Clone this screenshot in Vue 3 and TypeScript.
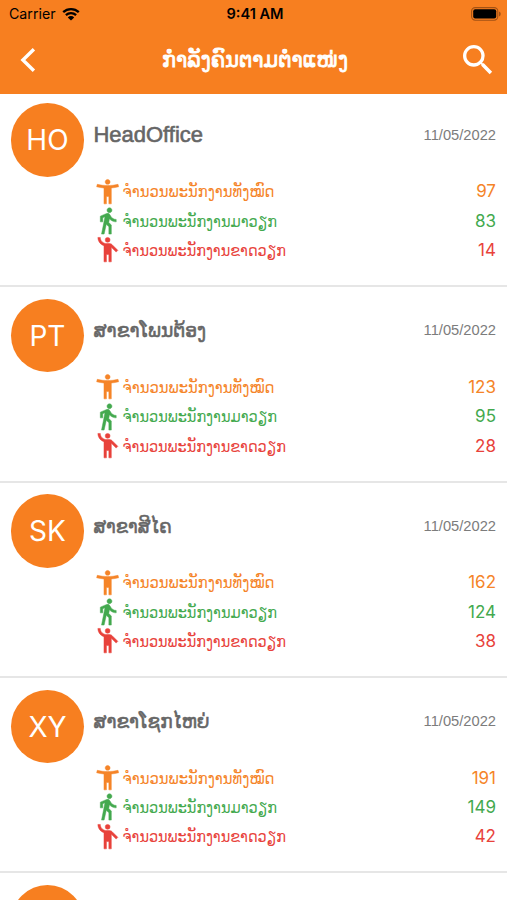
<script setup lang="ts">
interface Branch {
  initials: string
  name: string
  width: number
  latin?: boolean
  date: string
  counts: [number, number, number]
}

const branches: Branch[] = [
  { initials: 'HO', name: 'HeadOffice', width: 109.5, latin: true, date: '11/05/2022', counts: [97, 83, 14] },
  { initials: 'PT', name: 'ສາຂາໂພນຕ້ອງ', width: 112.5, date: '11/05/2022', counts: [123, 95, 28] },
  { initials: 'SK', name: 'ສາຂາສີໄຄ', width: 78, date: '11/05/2022', counts: [162, 124, 38] },
  { initials: 'XY', name: 'ສາຂາໂຊກໄຫຍ່', width: 116, date: '11/05/2022', counts: [191, 149, 42] },
]

const stats = [
  {
    kind: 'total',
    label: 'ຈຳນວນພະນັກງານທັງໝົດ',
    width: 152,
    icon: 'M20.5 6c-2.61.7-5.67 1-8.5 1s-5.89-.3-8.5-1L3 8c1.86.5 4 .83 6 1v13h2v-6h2v6h2V9c2-.17 4.14-.5 6-1l-.5-2zM12 6c1.1 0 2-.9 2-2s-.9-2-2-2-2 .9-2 2 .9 2 2 2z',
  },
  {
    kind: 'present',
    label: 'ຈຳນວນພະນັກງານມາວຽກ',
    width: 154.5,
    icon: 'M13.5 5.5c1.1 0 2-.9 2-2s-.9-2-2-2-2 .9-2 2 .9 2 2 2zM9.8 8.9L7 23h2.1l1.8-8 2.1 2v6h2v-7.5l-2.1-2 .6-3C14.8 12 16.8 13 19 13v-2c-1.9 0-3.5-1-4.3-2.4l-1-1.6c-.4-.6-1-1-1.7-1-.3 0-.5.1-.8.1L6 8.3V13h2V9.6l1.8-.7',
  },
  {
    kind: 'absent',
    label: 'ຈຳນວນພະນັກງານຂາດວຽກ',
    width: 163.5,
    icon: 'M12 2a2 2 0 1 1 0 4 2 2 0 0 1 0-4zM15.89 8.11C15.5 7.72 14.83 7 13.53 7h-2.54C8.24 6.99 6 4.75 6 2H4c0 3.16 2.11 5.84 5 6.71V22h2v-6h2v6h2V10.05L18.95 14l1.41-1.41-4.47-4.48z',
  },
]
</script>

<template>
  <div class="screen">
    <header class="header">
      <div class="status">
        <div class="carrier">
          <span>Carrier</span>
          <svg class="wifi" viewBox="0 0 18 14">
            <path d="M1.2 5.2a11.2 11.2 0 0 1 15.6 0M3.9 8.1a7.4 7.4 0 0 1 10.2 0" fill="none" stroke="#000" stroke-width="2.3" />
            <path d="M9 13.6L5.8 10.4a4.6 4.6 0 0 1 6.4 0z" />
          </svg>
        </div>
        <span class="clock">9:41 AM</span>
        <svg class="battery" viewBox="0 0 30 14">
          <rect x="0.6" y="0.6" width="26.2" height="12.6" rx="3.6" fill="none" stroke="#a35214" stroke-width="1.1" />
          <rect x="2.2" y="2.2" width="23" height="9.4" rx="2" />
          <path d="M28 4.6c1.2.4 1.7 1.3 1.7 2.4s-.5 2-1.7 2.4z" fill="#a35214" />
        </svg>
      </div>
      <div class="nav">
        <svg class="back" viewBox="0 0 16 26"><path d="M13.9 2.2L2.9 13l11 10.8" fill="none" stroke="#fff" stroke-width="3.4" /></svg>
        <h1 class="title">
          <svg class="text" width="186" height="36">
            <text x="0" y="25" textLength="186" lengthAdjust="spacingAndGlyphs">ກຳລັງຄົນຕາມຕຳແໜ່ງ</text>
          </svg>
        </h1>
        <svg class="search" viewBox="0 0 24 24"><path fill="#fff" d="M15.5 14h-.79l-.28-.27A6.471 6.471 0 0 0 16 9.5 6.5 6.5 0 1 0 9.5 16c1.61 0 3.09-.59 4.23-1.57l.27.28v.79l5 4.99L20.49 19l-4.99-5zm-6 0C7.01 14 5 11.99 5 9.5S7.01 5 9.5 5 14 7.01 14 9.5 11.99 14 9.5 14z" /></svg>
      </div>
    </header>
    <main class="list">
      <section v-for="b in branches" :key="b.initials" class="item">
        <div class="avatar">{{ b.initials }}</div>
        <div class="body">
          <div class="head">
            <svg class="text name" :class="{ latin: b.latin }" :width="b.width + 2" height="36">
              <text x="0.5" y="25" :textLength="b.width" lengthAdjust="spacingAndGlyphs">{{ b.name }}</text>
            </svg>
            <span class="date">{{ b.date }}</span>
          </div>
          <div v-for="(s, i) in stats" :key="s.kind" class="stat" :class="s.kind">
            <svg class="icon" viewBox="0 0 24 24"><path :d="s.icon" /></svg>
            <svg class="text label" :width="s.width + 2" height="28">
              <text x="0.5" y="19.5" :textLength="s.width" lengthAdjust="spacingAndGlyphs">{{ s.label }}</text>
            </svg>
            <span class="count">{{ b.counts[i] }}</span>
          </div>
        </div>
      </section>
      <section class="item last"><div class="avatar"></div></section>
    </main>
  </div>
</template>

<style>
body {
  background: #fff;
  overflow: hidden;
}
</style>

<style scoped>
.screen {
  width: 507px;
  height: 900px;
  overflow: hidden;
  background: #fff;
  font-family: Inter, 'Liberation Sans', 'DejaVu Sans', sans-serif;
}
.text {
  display: block;
  overflow: visible;
  fill: currentColor;
  font-family: 'DejaVu Sans', sans-serif;
}
.header {
  height: 93.5px;
  background: #f77f20;
}
.status {
  display: grid;
  grid-template-columns: 1fr auto 1fr;
  align-items: center;
  height: 27px;
  padding: 0 6px 0 9px;
  color: #000;
}
.carrier {
  display: flex;
  align-items: center;
  gap: 6px;
  font-size: 14.2px;
}
.wifi {
  width: 18px;
  height: 14px;
}
.clock {
  font-size: 14.6px;
  font-weight: 600;
}
.battery {
  width: 30px;
  height: 14px;
  justify-self: end;
}
.nav {
  display: grid;
  grid-template-columns: 1fr auto 1fr;
  align-items: center;
  height: 66px;
  padding: 0 9.5px 0 11.5px;
}
.back {
  width: 16px;
  height: 26px;
  margin-left: 8.5px;
}
.title {
  margin: 0;
  font-size: 21.5px;
  font-weight: 400;
  color: #fff;
}
.title .text {
  stroke: #fff;
  stroke-width: 0.8px;
}
.search {
  width: 40px;
  height: 40px;
  justify-self: end;
}
.item {
  display: flex;
  box-sizing: border-box;
  height: 193.65px;
  margin-bottom: 1.8px;
  padding: 9.9px 11px 0 10.8px;
  border-bottom: 2px solid #e6e6e6;
}
.avatar {
  flex: none;
  width: 73.3px;
  height: 73.3px;
  border-radius: 50%;
  background: #f77f20;
  color: #fff;
  font-size: 28px;
  line-height: 74.5px;
  text-align: center;
}
.body {
  flex: 1;
  padding-left: 9px;
}
.head {
  display: flex;
  align-items: center;
  justify-content: space-between;
  height: 63px;
  margin-bottom: 10.4px;
}
.name {
  font-size: 20px;
  color: #666;
  stroke: #666;
  stroke-width: 0.6px;
}
.latin {
  font-family: 'Liberation Sans', sans-serif;
  font-size: 22px;
}
.date {
  font-family: 'Liberation Sans', sans-serif;
  font-size: 14.7px;
  color: #7c7c7c;
}
.stat {
  display: flex;
  align-items: center;
  height: 29.33px;
}
.icon {
  flex: none;
  width: 29.3px;
  height: 29.3px;
}
.icon path {
  fill: currentColor;
  stroke: currentColor;
  stroke-width: 0.4px;
}
.label {
  font-size: 16px;
}
.count {
  margin-left: auto;
  font-size: 17px;
}
.total {
  color: #f58428;
}
.present {
  color: #43a94e;
}
.absent {
  color: #e8423b;
}
.last {
  border-bottom: 0;
}
</style>
